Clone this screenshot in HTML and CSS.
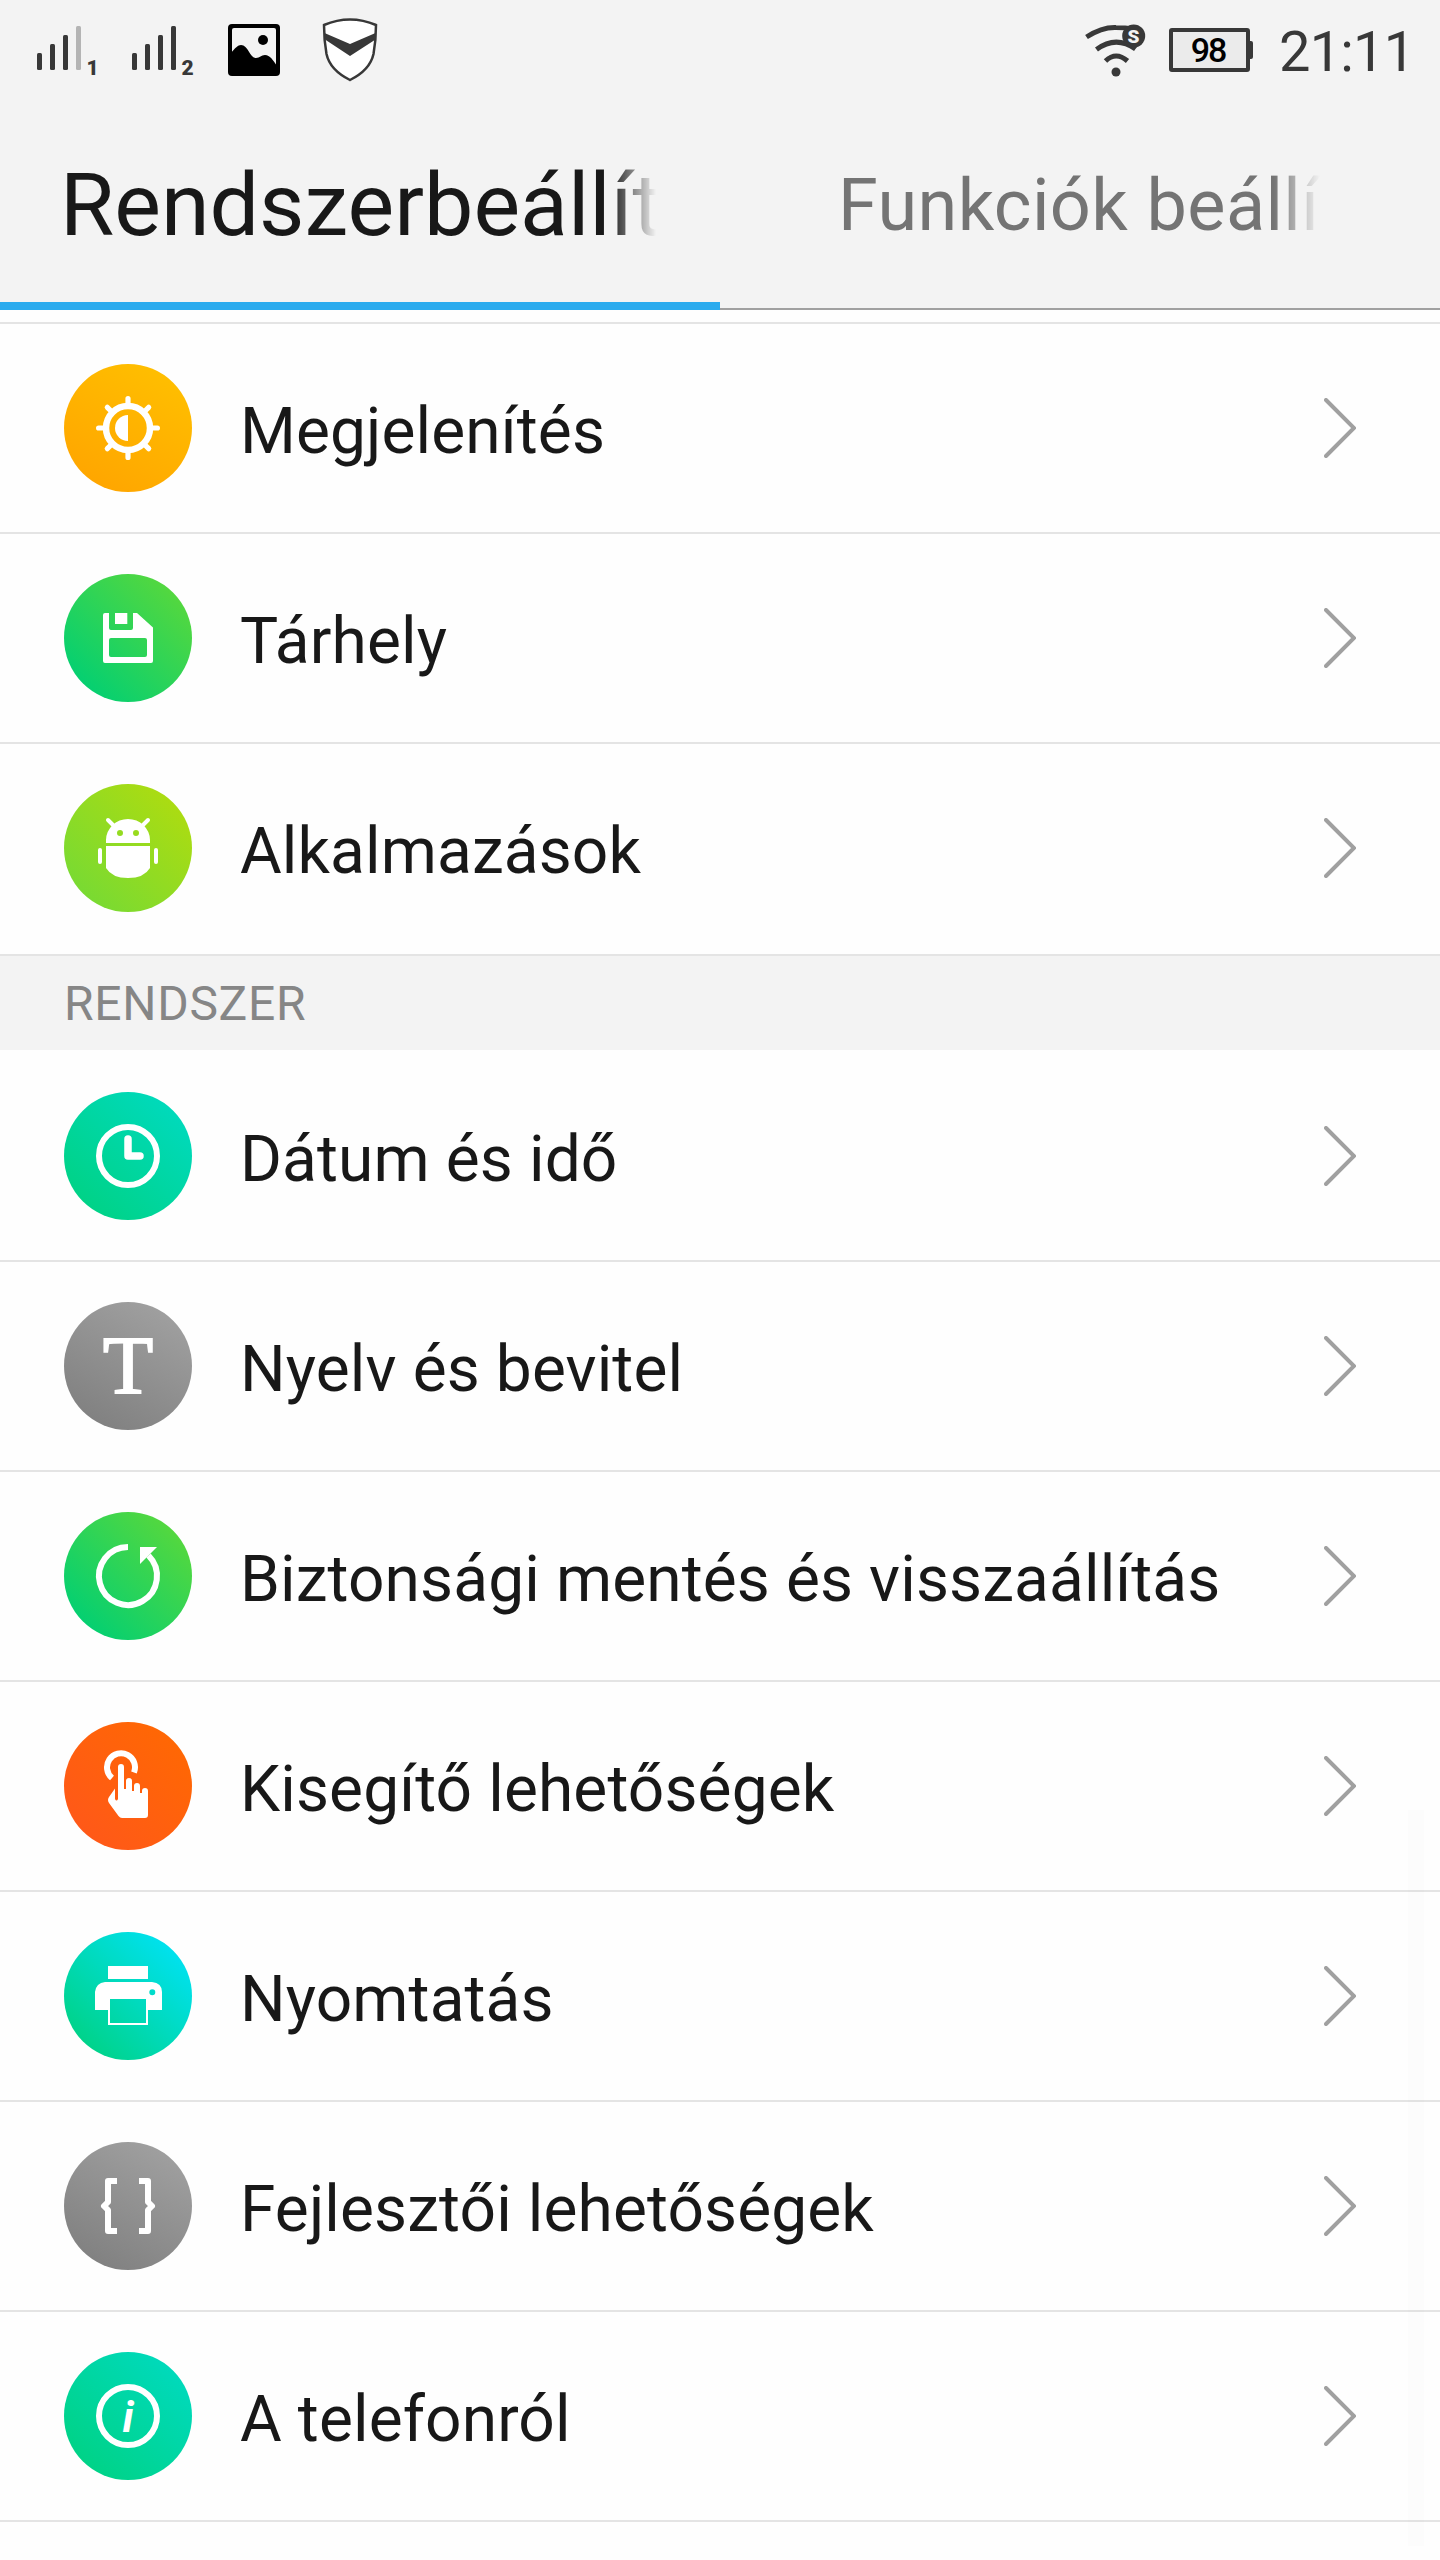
FILE: index.html
```html
<!DOCTYPE html>
<html lang="hu">
<head>
<meta charset="UTF-8" />
<meta name="viewport" content="width=device-width, initial-scale=1.0"/>
<title>Rendszerbeállítások</title>
<link rel="stylesheet" href="styles.css">
</head>
<body>

<header class="header">
  <!-- Status bar -->
  <div class="status-bar">
    <svg class="sim" width="64" height="60" viewBox="0 0 64 60">
      <g fill="#383838">
        <rect x="0" y="33" width="5" height="17" rx="1.5"/>
        <rect x="13" y="24" width="5" height="26" rx="1.5"/>
        <rect x="26" y="15" width="5" height="35" rx="1.5"/>
        <rect x="39" y="6" width="5" height="44" rx="1.5" fill="#b4b4b4"/>
      </g>
      <text x="49.500" y="55">1</text>
    </svg>
    <svg class="sim" width="64" height="60" viewBox="0 0 64 60">
      <g fill="#383838">
        <rect x="0" y="33" width="5" height="17" rx="1.5"/>
        <rect x="13" y="24" width="5" height="26" rx="1.5"/>
        <rect x="26" y="15" width="5" height="35" rx="1.5"/>
        <rect x="39" y="6" width="5" height="44" rx="1.5"/>
      </g>
      <text x="49.500" y="55">2</text>
    </svg>
    <svg class="picture" width="52" height="52" viewBox="0 0 52 52">
      <rect width="52" height="52" rx="4"/>
      <rect x="4" y="4" width="44" height="44" rx="2" fill="#f3f3f3"/>
      <circle cx="35" cy="16" r="5"/>
      <path d="M3 29C7 24 10 21 13 21C20 21 22 34 28 34C32 34 33 31 37 31C42 31 45 36 49 42V49H3Z"/>
    </svg>
    <svg class="shield" width="56" height="64" viewBox="0 0 56 64">
      <path d="M2 7Q28 -4 54 7Q54 22 51.500 36Q48 52 28 62Q8 52 4.500 36Q2 22 2 7Z" fill="#fff" stroke="#383838" stroke-width="2.500"/>
      <path d="M2.500 15L28 26L53.500 15V21.500L28 38L3 21.500Z" fill="#383838"/>
    </svg>
    <div class="status-right">
      <svg width="70" height="60" viewBox="0 0 70 60" fill="none" stroke="#383838" stroke-width="5">
        <path d="M6.500 17Q22 7 36 7.500Q46 7.500 52 9"/>
        <path d="M16.500 29.500Q36 15 55.500 29"/>
        <path d="M25.500 41Q36 31 47.500 41"/>
        <circle cx="36" cy="52" r="4.500" fill="#383838" stroke="none"/>
        <circle cx="53.700" cy="16" r="11.500" fill="#383838" stroke="none"/>
        <text class="wifi-mark" x="53.500" y="23">S</text>
      </svg>
      <div class="battery">98</div>
      <div class="clock">21:11</div>
    </div>
  </div>

  <!-- Tabs -->
  <nav class="tabs">
    <div class="tab active"><span>Rendszerbeállít</span></div>
    <div class="tab"><span>Funkciók beállí</span></div>
  </nav>
</header>

<main class="settings">
  <div class="row">
    <svg class="icon display" viewBox="0 0 128 128">
      <circle cx="64" cy="64" r="22" fill="none" stroke="#fff" stroke-width="6.500"/>
      <path d="M64 51A13 13 0 0 0 64 77Z" fill="#fff"/>
      <path d="M64 42V34.600M64 86V93.400M42 64H34.600M86 64H93.400M48.500 48.500L43.300 43.300M79.500 48.500L84.700 43.300M48.500 79.500L43.300 84.700M79.500 79.500L84.700 84.700" stroke="#fff" stroke-width="5.200" stroke-linecap="round"/>
    </svg>
    <span class="label">Megjelenítés</span>
    <svg class="arrow" viewBox="0 0 32 60"><path d="M2 2L30 30L2 58"/></svg>
  </div>
  <div class="row">
    <svg class="icon green" viewBox="0 0 128 128">
      <path fill="#fff" fill-rule="evenodd" d="M41 39H45V54Q45 56 47 56H67Q69 56 69 54V39H73L89 53.500V87Q89 89 87 89H41Q39 89 39 87V41Q39 39 41 39ZM47 64H81Q83 64 83 66V81Q83 83 81 83H47Q45 83 45 81V66Q45 64 47 64Z"/>
      <rect x="51" y="39" width="12.300" height="11" fill="#fff"/>
    </svg>
    <span class="label">Tárhely</span>
    <svg class="arrow" viewBox="0 0 32 60"><path d="M2 2L30 30L2 58"/></svg>
  </div>
  <div class="row">
    <svg class="icon apps" viewBox="0 0 128 128">
      <g fill="#fff">
        <path fill-rule="evenodd" d="M42 59V56A22 21 0 0 1 86 56V59ZM53 49a3 3 0 1 0 6 0a3 3 0 1 0 -6 0ZM69 49a3 3 0 1 0 6 0a3 3 0 1 0 -6 0Z"/>
        <path d="M42 62H86V84Q80 94 64 94Q48 94 42 84Z"/>
        <rect x="34" y="64" width="4" height="16" rx="2"/>
        <rect x="90" y="64" width="4" height="16" rx="2"/>
      </g>
      <path d="M44 36L51 43M84 36L77 43" stroke="#fff" stroke-width="4" stroke-linecap="round"/>
    </svg>
    <span class="label">Alkalmazások</span>
    <svg class="arrow" viewBox="0 0 32 60"><path d="M2 2L30 30L2 58"/></svg>
  </div>

  <h2 class="section">RENDSZER</h2>

  <div class="row">
    <svg class="icon teal" viewBox="0 0 128 128" fill="none" stroke="#fff">
      <circle cx="64" cy="64" r="29" stroke-width="6"/>
      <path d="M64 47V64H76" stroke-width="7.500" stroke-linecap="round" stroke-linejoin="round"/>
    </svg>
    <span class="label">Dátum és idő</span>
    <svg class="arrow" viewBox="0 0 32 60"><path d="M2 2L30 30L2 58"/></svg>
  </div>
  <div class="row">
    <svg class="icon grey" viewBox="0 0 128 128">
      <text class="letter-t" x="64" y="91">T</text>
    </svg>
    <span class="label">Nyelv és bevitel</span>
    <svg class="arrow" viewBox="0 0 32 60"><path d="M2 2L30 30L2 58"/></svg>
  </div>
  <div class="row">
    <svg class="icon green" viewBox="0 0 128 128">
      <path d="M64 35A29 29 0 1 0 84.500 43.500" fill="none" stroke="#fff" stroke-width="6"/>
      <path d="M76 35H93L76 52Z" fill="#fff"/>
    </svg>
    <span class="label">Biztonsági mentés és visszaállítás</span>
    <svg class="arrow" viewBox="0 0 32 60"><path d="M2 2L30 30L2 58"/></svg>
  </div>
  <div class="row">
    <svg class="icon orange" viewBox="0 0 128 128">
      <path d="M48 56A14 14 0 1 1 70 50.500" fill="none" stroke="#fff" stroke-width="6"/>
      <path fill="#fff" d="M54 45A3 3 0 0 1 60 45V67H62V59A3 3 0 0 1 68 59V69H70V64A3 3 0 0 1 76 64V71H78V69A3 3 0 0 1 84 69V93Q84 96 81 96H58Q56 96 54.500 94L45 81Q43 78 45 75L51 66.500V77Q52.500 80 54 77Z"/>
    </svg>
    <span class="label">Kisegítő lehetőségek</span>
    <svg class="arrow" viewBox="0 0 32 60"><path d="M2 2L30 30L2 58"/></svg>
  </div>
  <div class="row">
    <svg class="icon printer" viewBox="0 0 128 128">
      <path fill="#fff" fill-rule="evenodd" d="M44 34H84V47H44ZM41 50H88Q98 51 98 60V78H84V93H44V78H31V60Q32 51 41 50ZM46 67V91H82V67ZM85.300 60.300a3 3 0 1 0 6 0a3 3 0 1 0 -6 0Z"/>
    </svg>
    <span class="label">Nyomtatás</span>
    <svg class="arrow" viewBox="0 0 32 60"><path d="M2 2L30 30L2 58"/></svg>
  </div>
  <div class="row">
    <svg class="icon grey" viewBox="0 0 128 128" fill="none" stroke="#fff" stroke-width="6" stroke-linejoin="round">
      <path d="M53 39H44V60L40 64L44 68V89H53M75 39H84V60L88 64L84 68V89H75"/>
    </svg>
    <span class="label">Fejlesztői lehetőségek</span>
    <svg class="arrow" viewBox="0 0 32 60"><path d="M2 2L30 30L2 58"/></svg>
  </div>
  <div class="row">
    <svg class="icon teal" viewBox="0 0 128 128">
      <circle cx="64" cy="64" r="29" fill="none" stroke="#fff" stroke-width="6"/>
      <text class="letter-i" x="64" y="80">i</text>
    </svg>
    <span class="label">A telefonról</span>
    <svg class="arrow" viewBox="0 0 32 60"><path d="M2 2L30 30L2 58"/></svg>
  </div>

  <div class="scrollbar"></div>
</main>

</body>
</html>
```

FILE: styles.css
```css
* {
  box-sizing: border-box;
}

body {
  margin: 0;
  width: 1440px;
  height: 2560px;
  overflow: hidden;
  background: #fefefe;
  font-family: Roboto, sans-serif;
  color: #181818;
}

svg {
  display: block;
  flex-shrink: 0;
}

/* Header */
.header {
  height: 310px;
  background: #f3f3f3;
}

.status-bar {
  display: flex;
  align-items: center;
  height: 100px;
  padding: 0 32px 0 37px;
}
.sim {
  margin-right: 31px;
}
.sim text {
  font-size: 21px;
  font-weight: 900;
  fill: #383838;
}
.picture {
  margin-left: 1px;
}
.shield {
  margin-left: 42px;
}
.status-right {
  display: flex;
  align-items: center;
  margin-left: auto;
}
.wifi-mark {
  font-size: 19px;
  font-weight: 900;
  fill: #f3f3f3;
  stroke: none;
  text-anchor: middle;
}
.battery {
  position: relative;
  width: 81px;
  height: 44px;
  margin-left: 19px;
  border: 4px solid #383838;
  border-radius: 3px;
  background: #ebebeb;
  color: #000;
  font-size: 34px;
  font-weight: 500;
  line-height: 36px;
  letter-spacing: -2px;
  text-align: center;
  text-indent: -3px;
}
.battery::after {
  content: '';
  position: absolute;
  left: 76px;
  top: 9px;
  width: 4px;
  height: 18px;
  border-radius: 0 2px 2px 0;
  background: #383838;
}
.clock {
  width: 129px;
  margin-left: 29px;
  padding-top: 4px;
  font-size: 56px;
  line-height: 66px;
  letter-spacing: -0.8px;
  white-space: nowrap;
  color: #383838;
}

/* Tabs */
.tabs {
  display: flex;
  height: 210px;
}
.tab {
  width: 720px;
  padding: 56px 120px 0 118px;
  border-bottom: 2px solid #a0a0a0;
  color: #747474;
  font-size: 72px;
  line-height: 100px;
  letter-spacing: 0.4px;
  white-space: nowrap;
}
.tab span {
  display: block;
  overflow: hidden;
  -webkit-mask-image: linear-gradient(to left, transparent, #000 46px);
  mask-image: linear-gradient(to left, transparent, #000 46px);
}
.tab.active {
  padding: 55px 64px 0 60px;
  border-bottom: 8px solid #2aabee;
  color: #181818;
  font-size: 88px;
  letter-spacing: 0;
}

/* Settings list */
.settings {
  position: relative;
  margin-top: 12px;
  border-top: 2px solid #e4e4e4;
}
.row {
  display: flex;
  align-items: center;
  height: 210px;
  padding: 0 84px 0 64px;
  border-bottom: 2px solid #e4e4e4;
}
.row:has(+ .section) {
  border-bottom-color: transparent;
}
.section {
  height: 96px;
  margin: 0 0 2px;
  padding-left: 64px;
  border-top: 2px solid #e4e4e4;
  background: #f3f3f3;
  color: #868686;
  font-size: 48px;
  font-weight: 400;
  line-height: 96px;
  letter-spacing: 0.7px;
}
.label {
  flex: 1;
  margin-left: 48px;
  padding-top: 7px;
  font-size: 64px;
  line-height: 80px;
  letter-spacing: 0.12px;
}
.arrow {
  width: 32px;
  height: 60px;
  fill: none;
  stroke: #a0a0a0;
  stroke-width: 4;
  stroke-linecap: round;
}

/* Icons */
.icon {
  width: 128px;
  height: 128px;
  border-radius: 50%;
}
.display {
  background: linear-gradient(30deg, #ffa200, #ffc200);
}
.green {
  background: linear-gradient(45deg, #00cf74 10%, #58d83c 90%);
}
.apps {
  background: linear-gradient(45deg, #76da34 10%, #aedc10 90%);
}
.teal {
  background: linear-gradient(45deg, #00d284 10%, #00dabe 90%);
}
.grey {
  background: linear-gradient(30deg, #7c7c7c, #a4a4a4);
}
.orange {
  background: linear-gradient(45deg, #ff561c, #ff6a00);
}
.printer {
  background: linear-gradient(45deg, #00d284 10%, #00e2f4 90%);
}
.letter-t {
  font-family: "Liberation Serif", serif;
  font-size: 82px;
  fill: #fff;
  stroke: #fff;
  stroke-width: 2;
  text-anchor: middle;
}
.letter-i {
  font-size: 43px;
  font-style: italic;
  font-weight: 700;
  fill: #fff;
  text-anchor: middle;
}

.scrollbar {
  position: absolute;
  right: 16px;
  top: 1486px;
  width: 16px;
  height: 736px;
  background: rgba(0,0,0,0.008);
}
```
